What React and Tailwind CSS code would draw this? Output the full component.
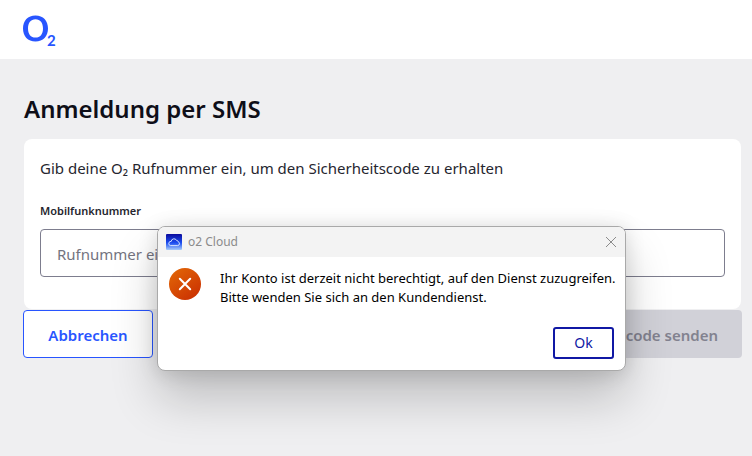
function BrandLogo() {
  return (
    <svg width="34" height="34" viewBox="0 0 34 34" role="img" aria-label="O2">
      <path
        fill="#2855ff"
        fillRule="evenodd"
        d="M12.5 .4C20.2 .4 25 5.6 25 13.4S20.2 26.4 12.5 26.4 0 21.2 0 13.4 4.8 .4 12.5 .4ZM12.5 4.2C7.7 4.2 5 7.8 5 13.4S7.7 22.6 12.5 22.6 20 19 20 13.4 17.3 4.2 12.5 4.2Z"
      />
      <text x="24" y="31" fill="#2855ff" className="font-[Lato,sans-serif] text-[15px] font-bold">
        2
      </text>
    </svg>
  );
}

function CloudIcon() {
  return (
    <svg width="16" height="16" viewBox="0 0 16 16" aria-hidden="true">
      <defs>
        <linearGradient id="cloud-bg" x1="0" y1="0" x2="0" y2="1">
          <stop offset="0" stopColor="#0a0a9c" />
          <stop offset="0.55" stopColor="#1b4df0" />
          <stop offset="1" stopColor="#a9cdfb" />
        </linearGradient>
      </defs>
      <rect width="16" height="16" rx="1" fill="url(#cloud-bg)" />
      <path
        d="M4.6 11.6h7a2 2 0 0 0 .5-3.9 1.9 1.9 0 0 0-1.7-1.5 2.8 2.8 0 0 0-5.2 1.2 2.1 2.1 0 0 0-.6 4.2z"
        fill="none"
        stroke="#e4efff"
        strokeWidth="0.9"
        strokeLinejoin="round"
      />
    </svg>
  );
}

function ErrorIcon() {
  return (
    <svg width="32" height="32" viewBox="0 0 32 32" className="shrink-0" aria-hidden="true">
      <defs>
        <linearGradient id="error-bg" x1="0.15" y1="0.1" x2="0.8" y2="0.95">
          <stop offset="0" stopColor="#e06206" />
          <stop offset="1" stopColor="#cb3202" />
        </linearGradient>
      </defs>
      <circle cx="16" cy="16" r="16" fill="url(#error-bg)" />
      <path d="M10.8 10.8 21.2 21.2M21.2 10.8 10.8 21.2" stroke="#fff" strokeWidth="2" strokeLinecap="round" />
    </svg>
  );
}

function ErrorDialog() {
  return (
    <div
      role="alertdialog"
      aria-labelledby="dialog-title"
      aria-describedby="dialog-text"
      className="absolute top-[226px] left-[157px] w-[469px] overflow-hidden rounded-lg border border-[#a9a9a9] bg-white font-['Noto_Sans',sans-serif] shadow-[0_28px_48px_rgba(0,0,0,0.2),0_2px_20px_rgba(0,0,0,0.14)]"
    >
      <div className="flex h-[30px] items-center gap-1.5 bg-[#f3f3f3] px-2">
        <CloudIcon />
        <span id="dialog-title" className="grow text-xs text-[#8b8b8b]">
          o2 Cloud
        </span>
        <button type="button" aria-label="Schließen" className="flex size-3 items-center justify-center">
          <svg width="12" height="12" viewBox="0 0 12 12" aria-hidden="true">
            <path d="M1 1 11 11M11 1 1 11" stroke="#8b8b8b" strokeWidth="1" />
          </svg>
        </button>
      </div>
      <div className="flex gap-[19px] px-[11px] pt-[11px]">
        <ErrorIcon />
        <p id="dialog-text" className="pt-px text-[13px] leading-[19px] whitespace-nowrap text-black">
          Ihr Konto ist derzeit nicht berechtigt, auf den Dienst zuzugreifen.
          <br />
          Bitte wenden Sie sich an den Kundendienst.
        </p>
      </div>
      <div className="flex justify-end px-[11px] pt-5 pb-[11px]">
        <button
          type="button"
          className="h-8 w-[61px] rounded-[3px] border-2 border-[#1018a4] bg-white text-sm text-[#1018a4]"
        >
          Ok
        </button>
      </div>
    </div>
  );
}

export default function App() {
  return (
    <div className="relative min-h-screen overflow-hidden bg-[#efeff1] font-['Noto_Sans',sans-serif] text-[#26262f]">
      <header className="flex h-[59px] items-start bg-white px-[23px] pt-[15px]">
        <BrandLogo />
      </header>
      <main className="pt-8 pr-[11px] pl-6">
        <h1 className="text-2xl leading-9 font-semibold text-[#0e0e18]">Anmeldung per SMS</h1>
        <form>
          <div className="mt-3 rounded-lg bg-white px-4 pt-[17px] pb-8">
            <p className="text-[15px] leading-6">Gib deine O₂ Rufnummer ein, um den Sicherheitscode zu erhalten</p>
            <label htmlFor="phone" className="mt-[23px] mb-[10px] block text-[11px] leading-4 font-semibold">
              Mobilfunknummer
            </label>
            <input
              id="phone"
              type="tel"
              placeholder="Rufnummer eingeben"
              className="block h-12 w-full rounded border border-[#7d7d8e] bg-white px-4 pt-0.5 text-[15px] placeholder:text-[#74747f]"
            />
          </div>
          <div className="-mx-px mt-px flex justify-between">
            <button
              type="button"
              className="h-12 w-[130px] rounded border border-[#2855ff] bg-white pt-0.5 text-[15px] font-semibold text-[#2855ff]"
            >
              Abbrechen
            </button>
            <button
              type="submit"
              disabled
              className="h-12 rounded bg-[#d1d1d8] px-6 pt-0.5 text-[15px] font-semibold text-[#82828f]"
            >
              Sicherheitscode senden
            </button>
          </div>
        </form>
      </main>
      <ErrorDialog />
    </div>
  );
}
